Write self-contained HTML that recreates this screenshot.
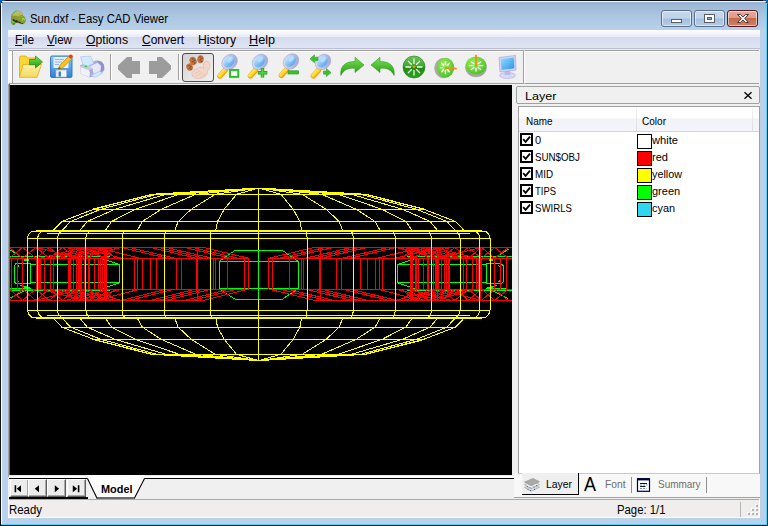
<!DOCTYPE html>
<html lang="en"><head><meta charset="utf-8"><title>Sun.dxf - Easy CAD Viewer</title>
<style>

html,body{margin:0;padding:0}
body{width:768px;height:526px;overflow:hidden;background:#0f5cba;position:relative;font-family:"Liberation Sans",sans-serif;font-size:12px}
div,span,svg{position:absolute;box-sizing:border-box}
.t{white-space:pre;transform-origin:0 50%;display:block}
u{text-decoration:underline;text-underline-offset:1px}
#win{left:0;top:0;width:768px;height:526px;background:#b9d1ea;border-radius:6px 6px 0 0;overflow:hidden;
  box-shadow:inset 0 0 0 1px #101418}
#title{left:1px;top:1px;width:766px;height:29px;background:linear-gradient(#97b3d1,#a9c4e0 45%,#b9d1ea);border-radius:5px 5px 0 0}
#hl-top{left:2px;top:1px;width:764px;height:1px;background:rgba(255,255,255,.85)}
#hl-left{left:1px;top:3px;width:1px;height:521px;background:#fff}
#hl-right{left:766px;top:3px;width:1px;height:522px;background:#3edcff}
#hl-bot{left:1px;top:524px;width:766px;height:1px;background:#3edcff}
#edge-bot{left:0;top:525px;width:768px;height:1px;background:#0a0a0a}
#client{left:8px;top:30px;width:752px;height:488px;background:#fff}
.cb{top:10px;height:17px;border-radius:3px;border:1px solid #5b6f8e;box-shadow:inset 0 0 0 1px rgba(255,255,255,.55)}
#bmin,#bmax{background:linear-gradient(#c5d8ee 0,#bfd3eb 48%,#a5bfdd 52%,#b3cbe6 100%)}
#bmin{left:661px;width:31px}
#bmax{left:694px;width:31px}
#bclose{left:727px;width:31px;border-color:#5a1722;background:linear-gradient(#e9a99a 0,#e19885 46%,#c56a4d 50%,#cf7f63 100%)}
#menubar{left:8px;top:30px;width:752px;height:19px;background:linear-gradient(to bottom,#fff 0,#f4f6fb 3px,#e8ebf6 7px,#d5d9ed 7px,#dfe4f3 17px,#dfe4f3 18px,#bcc0d6 18px,#bcc0d6 19px)}
#toolrow{left:8px;top:49px;width:752px;height:36px;background:linear-gradient(#ececec 0,#ececec 1px,#f0f0f0 1px)}
#toolbar{left:9px;top:50px;width:515px;height:34px;background:#f0f0f0;border-right:1px solid #a0a0a0;border-bottom:1px solid #a0a0a0;border-top:1px solid #a0a0a0;box-shadow:inset 0 1px 0 #fff}
#toolrest{left:524px;top:50px;width:235px;height:34px;background:#f0f0f0;border-bottom:1px solid #a0a0a0;border-top:1px solid #a0a0a0;border-left:1px solid #fff;box-shadow:inset 0 1px 0 #fff}
#grip{left:8px;top:51px;width:5px;height:32px;background:#fff;border-right:1px solid #a0a0a0}
.sep{top:54px;width:2px;height:26px;border-left:1px solid #a0a0a0;border-right:1px solid #fff}
#pressed{left:182px;top:53px;width:32px;height:29px;border:1px solid #4d4d4d;border-radius:3px;background:linear-gradient(135deg,#d0d0d0,#e4e4e4 50%,#efefef)}
#main{left:8px;top:85px;width:752px;height:415px;background:#f0f0f0}
#canvas{left:10px;top:85px;width:502px;height:390px;background:#000;overflow:hidden}
#cleft{left:8px;top:84px;width:2px;height:393px;background:linear-gradient(to right,#a0a0a0 0,#a0a0a0 1px,#696969 1px)}
#tabbar{left:9px;top:475px;width:505px;height:24px;background:linear-gradient(#e9e9e9 0,#e9e9e9 1px,#fff 1px,#fff 3px,#f0f0f0 3px)}
#tabline{left:9px;top:478px;width:505px;height:1px;background:#000}
#navbot{left:9px;top:497px;width:79px;height:2px;background:#000}
.nb{top:479px;width:19px;height:18px;background:#ececec;border-top:1px solid #fff;border-left:1px solid #fff;border-right:1px solid #5f5f5f;border-bottom:1px solid #5f5f5f;box-shadow:inset -1px -1px 0 #a8a8a8}
#panel{left:516px;top:86px;width:244px;height:412px;background:#f0f0f0}
#phead{left:516px;top:86px;width:244px;height:18px;background:#f0f0f0;border:1px solid #a0a0a0;border-radius:2px}
#plist{left:518px;top:106px;width:242px;height:368px;background:#fff;border:1px solid #a0a0a0;border-bottom-color:#c8c8c8}
#lhead{left:519px;top:107px;width:240px;height:25px;background:linear-gradient(#fff 0,#fff 45%,#f1f3f9 50%,#f4f5fa 100%);border-bottom:1px solid #d5d5d5}
.csep{top:108px;width:1px;height:23px;background:linear-gradient(#f2f2f2,#dcdcdc)}
.chk{left:520px;width:13px;height:13px;border:1px solid #000;background:#fff;box-shadow:inset 0 0 0 1px #000}
.sw{left:637px;width:15px;height:15px;border:1px solid #000}
#ptabs{left:514px;top:474px;width:246px;height:23px;background:#f8f8f8}
#ptabline{left:514px;top:497px;width:246px;height:1px;background:#a0a0a0}
#tabL{left:522px;top:473px;width:57px;height:22px;background:#efefef;border-right:1px solid #000;border-bottom:1px solid #000}
.tsep{top:477px;width:1px;height:16px;background:#909090}
#status{left:9px;top:499px;width:750px;height:18px;background:#f0eded;border-top:1px solid #a9a9a9}
#ssep{left:740px;top:502px;width:1px;height:15px;background:#b5b5b5}

</style></head>
<body>
<section aria-label="window frame">
<div id="win"></div><div id="title"></div><div id="hl-top"></div><div id="hl-left"></div><div id="hl-right"></div><div id="hl-bot"></div><div id="edge-bot"></div>
<div id="client"></div>
<div id="bmin" class="cb"></div><div id="bmax" class="cb"></div><div id="bclose" class="cb"></div>
<svg style="left:661px;top:10px" width="98" height="17" viewBox="0 0 98 17">
<rect x="10.5" y="9.5" width="10" height="3" fill="#fff" stroke="#5a5f66" stroke-width="1"/>
<rect x="43.500" y="4.5" width="10" height="8" fill="#fff" stroke="#5a5f66" stroke-width="1"/><rect x="46.5" y="7.5" width="4" height="2" fill="#8fa9cf" stroke="#5a5f66" stroke-width="1"/>
<path d="M76.5 4.500 l3 0 l2.500 2.600 l2.500 -2.600 l3 0 l-3.800 4 l3.800 4 l-3 0 l-2.500 -2.600 l-2.500 2.600 l-3 0 l3.800 -4z" fill="#fff" stroke="#4b3a3a" stroke-width="1"/>
</svg>
</section><section aria-label="menu and toolbar">
<div id="menubar"></div><div id="toolrow"></div><div id="toolbar"></div><div id="toolrest"></div><div id="grip"></div>
<div class="sep" style="left:110px"></div><div class="sep" style="left:178px"></div>
<div id="pressed"></div>
</section><section aria-label="drawing view">
<div id="main"></div><div id="cleft"></div><div id="ctop"></div><div id="rtop"></div>
<div id="canvas"><svg style="left:0;top:0" width="502" height="390" viewBox="10 85 502 390" shape-rendering="crispEdges" fill="none" stroke-width="1">
<path stroke="#00ff00" d="M16 263.7 L30.5 263.7 L30.5 283.6 L16 283.6 L14.1 281.6 L14.1 265.7 L16 263.7 M501.4 263.7 L486.9 263.7 L486.9 283.6 L501.4 283.6 L503.3 281.6 L503.3 265.7 L501.4 263.7 M19 265.6 L17.3 267 L17.3 280.4 L19 281.8 M498.4 265.6 L500.1 267 L500.1 280.4 L498.4 281.8 M30.5 264.5 L119.5 264.5 L119.5 282.8 L30.5 282.8 M486.9 264.5 L397.9 264.5 L397.9 282.8 L486.9 282.8 M119.5 264.5 L102 258.6 M397.9 264.5 L415.4 258.6 M119.5 282.8 L102 288.8 M397.9 282.8 L415.4 288.8 M0 256.7 L110 256.7 M517.4 256.7 L407.4 256.7 M0 290.3 L110 290.3 M517.4 290.3 L407.4 290.3 M9 249.3 L22 257 M508.4 249.3 L495.4 257 M9 298.6 L25 290.7 M508.4 298.6 L492.4 290.7 M24 259.8 L28.5 259.8 M493.4 259.8 L488.9 259.8 M24 260.8 L28.5 260.8 M493.4 260.8 L488.9 260.8 M24 287.2 L28.5 287.2 M493.4 287.2 L488.9 287.2 M20 285.5 L30 287.5 M497.4 285.5 L487.4 287.5 M10 288.3 L31 288.3 M507.4 288.3 L486.4 288.3 M235 250.4 L282.4 250.4 L298.4 261.5 L298.4 288.4 L282.4 299.2 L235 299.2 L219 288.4 L219 261.5 L235 250.4 M219 261.5 L298.4 261.5 M219 288.4 L298.4 288.4"/>
<path stroke="#ff0000" d="M0 247.4 L203 247.4 L248.5 258.2 M517.4 247.4 L314.4 247.4 L268.9 258.2 M0 300.4 L203 300.4 L248.5 289.1 M517.4 300.4 L314.4 300.4 L268.9 289.1 M0 258.2 L248.5 258.2 M517.4 258.2 L268.9 258.2 M0 289.1 L248.5 289.1 M517.4 289.1 L268.9 289.1 M11.4 258.2 L11.4 289.1 M506 258.2 L506 289.1 M17.1 258.2 L17.1 289.1 M500.3 258.2 L500.3 289.1 M22.6 258.2 L22.6 289.1 M494.8 258.2 L494.8 289.1 M40.8 258.2 L40.8 289.1 M476.6 258.2 L476.6 289.1 M44.5 258.2 L44.5 289.1 M472.9 258.2 L472.9 289.1 M50.6 258.2 L50.6 289.1 M466.8 258.2 L466.8 289.1 M53.6 258.2 L53.6 289.1 M463.8 258.2 L463.8 289.1 M68.2 258.2 L68.2 289.1 M449.2 258.2 L449.2 289.1 M69.2 258.2 L69.2 289.1 M448.2 258.2 L448.2 289.1 M70.6 258.2 L70.6 289.1 M446.8 258.2 L446.8 289.1 M73 258.2 L73 289.1 M444.4 258.2 L444.4 289.1 M76 258.2 L76 289.1 M441.4 258.2 L441.4 289.1 M84 258.2 L84 289.1 M433.4 258.2 L433.4 289.1 M85.8 258.2 L85.8 289.1 M431.6 258.2 L431.6 289.1 M88.8 258.2 L88.8 289.1 M428.6 258.2 L428.6 289.1 M89.8 258.2 L89.8 289.1 M427.6 258.2 L427.6 289.1 M94.3 258.2 L94.3 289.1 M423.1 258.2 L423.1 289.1 M98.6 258.2 L98.6 289.1 M418.8 258.2 L418.8 289.1 M100.8 258.2 L100.8 289.1 M416.6 258.2 L416.6 289.1 M102 258.2 L102 289.1 M415.4 258.2 L415.4 289.1 M134.5 258.2 L134.5 289.1 M382.9 258.2 L382.9 289.1 M137.8 258.2 L137.8 289.1 M379.6 258.2 L379.6 289.1 M142.3 258.2 L142.3 289.1 M375.1 258.2 L375.1 289.1 M150.1 258.2 L150.1 289.1 M367.3 258.2 L367.3 289.1 M156.6 258.2 L156.6 289.1 M360.8 258.2 L360.8 289.1 M176.2 258.2 L176.2 289.1 M341.2 258.2 L341.2 289.1 M181.4 258.2 L181.4 289.1 M336 258.2 L336 289.1 M213.6 258.2 L213.6 289.1 M303.8 258.2 L303.8 289.1 M215.5 258.2 L215.5 289.1 M301.9 258.2 L301.9 289.1 M227.6 258.2 L227.6 289.1 M289.8 258.2 L289.8 289.1 M244.6 258.2 L244.6 289.1 M272.8 258.2 L272.8 289.1 M248.5 258.2 L248.5 289.1 M268.9 258.2 L268.9 289.1 M36 258.2 L36 289.1 M481.4 258.2 L481.4 289.1 M37 258.2 L37 289.1 M480.4 258.2 L480.4 289.1 M38 258.2 L38 289.1 M479.4 258.2 L479.4 289.1 M39 258.2 L39 289.1 M478.4 258.2 L478.4 289.1 M78.5 258.2 L78.5 289.1 M438.9 258.2 L438.9 289.1 M79.5 258.2 L79.5 289.1 M437.9 258.2 L437.9 289.1 M80.5 258.2 L80.5 289.1 M436.9 258.2 L436.9 289.1 M81.5 258.2 L81.5 289.1 M435.9 258.2 L435.9 289.1 M104.5 258.2 L104.5 289.1 M412.9 258.2 L412.9 289.1 M105.5 258.2 L105.5 289.1 M411.9 258.2 L411.9 289.1 M106.5 258.2 L106.5 289.1 M410.9 258.2 L410.9 289.1 M196.8 258.2 L196.8 289.1 M320.6 258.2 L320.6 289.1 M197.8 258.2 L197.8 289.1 M319.6 258.2 L319.6 289.1 M37.2 247.4 L37.2 300.4 M480.2 247.4 L480.2 300.4 M80 247.4 L80 300.4 M437.4 247.4 L437.4 300.4 M105.9 247.4 L105.9 300.4 M411.5 247.4 L411.5 300.4 M197.3 247.4 L197.3 300.4 M320.1 247.4 L320.1 300.4 M121 247.4 L167 258.2 M396.4 247.4 L350.4 258.2 M121 300.4 L167 289.1 M396.4 300.4 L350.4 289.1 M129 247.4 L175 258.2 M388.4 247.4 L342.4 258.2 M129 300.4 L175 289.1 M388.4 300.4 L342.4 289.1 M150 247.4 L196 258.2 M367.4 247.4 L321.4 258.2 M150 300.4 L196 289.1 M367.4 300.4 L321.4 289.1 M158 247.4 L204 258.2 M359.4 247.4 L313.4 258.2 M158 300.4 L204 289.1 M359.4 300.4 L313.4 289.1 M166 247.4 L212 258.2 M351.4 247.4 L305.4 258.2 M166 300.4 L212 289.1 M351.4 300.4 L305.4 289.1 M184 247.4 L230 258.2 M333.4 247.4 L287.4 258.2 M184 300.4 L230 289.1 M333.4 300.4 L287.4 289.1 M192 247.4 L238 258.2 M325.4 247.4 L279.4 258.2 M192 300.4 L238 289.1 M325.4 300.4 L279.4 289.1 M203 247.4 L248.5 258.2 M314.4 247.4 L268.9 258.2 M203 300.4 L248.5 289.1 M314.4 300.4 L268.9 289.1 M40 258.2 L84 247.4 M477.4 258.2 L433.4 247.4 M40 289.1 L84 300.4 M477.4 289.1 L433.4 300.4 M47.5 258.2 L91.5 247.4 M469.9 258.2 L425.9 247.4 M47.5 289.1 L91.5 300.4 M469.9 289.1 L425.9 300.4 M55 258.2 L99 247.4 M462.4 258.2 L418.4 247.4 M55 289.1 L99 300.4 M462.4 289.1 L418.4 300.4 M62.5 258.2 L106.5 247.4 M454.9 258.2 L410.9 247.4 M62.5 289.1 L106.5 300.4 M454.9 289.1 L410.9 300.4 M70 258.2 L114 247.4 M447.4 258.2 L403.4 247.4 M70 289.1 L114 300.4 M447.4 289.1 L403.4 300.4 M77.5 258.2 L121.5 247.4 M439.9 258.2 L395.9 247.4 M77.5 289.1 L121.5 300.4 M439.9 289.1 L395.9 300.4 M36 247.4 L80 258.2 M481.4 247.4 L437.4 258.2 M36 300.4 L80 289.1 M481.4 300.4 L437.4 289.1 M66 247.4 L110 258.2 M451.4 247.4 L407.4 258.2 M66 300.4 L110 289.1 M451.4 300.4 L407.4 289.1 M78 247.4 L122 258.2 M439.4 247.4 L395.4 258.2 M78 300.4 L122 289.1 M439.4 300.4 L395.4 289.1 M96 247.4 L140 258.2 M421.4 247.4 L377.4 258.2 M96 300.4 L140 289.1 M421.4 300.4 L377.4 289.1 M9.3 247.4 L22.6 258.2 M508.1 247.4 L494.8 258.2 M22.6 247.4 L9.3 258.2 M494.8 247.4 L508.1 258.2 M9.3 300.4 L22.6 289.1 M508.1 300.4 L494.8 289.1 M22.6 300.4 L9.3 289.1 M494.8 300.4 L508.1 289.1 M22.6 247.4 L35.9 258.2 M494.8 247.4 L481.5 258.2 M35.9 247.4 L22.6 258.2 M481.5 247.4 L494.8 258.2 M22.6 300.4 L35.9 289.1 M494.8 300.4 L481.5 289.1 M35.9 300.4 L22.6 289.1 M481.5 300.4 L494.8 289.1 M35.9 247.4 L49.2 258.2 M481.5 247.4 L468.2 258.2 M49.2 247.4 L35.9 258.2 M468.2 247.4 L481.5 258.2 M35.9 300.4 L49.2 289.1 M481.5 300.4 L468.2 289.1 M49.2 300.4 L35.9 289.1 M468.2 300.4 L481.5 289.1 M49.2 247.4 L62.5 258.2 M468.2 247.4 L454.9 258.2 M62.5 247.4 L49.2 258.2 M454.9 247.4 L468.2 258.2 M49.2 300.4 L62.5 289.1 M468.2 300.4 L454.9 289.1 M62.5 300.4 L49.2 289.1 M454.9 300.4 L468.2 289.1 M62.5 247.4 L75.8 258.2 M454.9 247.4 L441.6 258.2 M75.8 247.4 L62.5 258.2 M441.6 247.4 L454.9 258.2 M62.5 300.4 L75.8 289.1 M454.9 300.4 L441.6 289.1 M75.8 300.4 L62.5 289.1 M441.6 300.4 L454.9 289.1 M75.8 247.4 L89.1 258.2 M441.6 247.4 L428.3 258.2 M89.1 247.4 L75.8 258.2 M428.3 247.4 L441.6 258.2 M75.8 300.4 L89.1 289.1 M441.6 300.4 L428.3 289.1 M89.1 300.4 L75.8 289.1 M428.3 300.4 L441.6 289.1 M89.1 247.4 L102.4 258.2 M428.3 247.4 L415 258.2 M102.4 247.4 L89.1 258.2 M415 247.4 L428.3 258.2 M89.1 300.4 L102.4 289.1 M428.3 300.4 L415 289.1 M102.4 300.4 L89.1 289.1 M415 300.4 L428.3 289.1 M102.4 247.4 L115.7 258.2 M415 247.4 L401.7 258.2 M115.7 247.4 L102.4 258.2 M401.7 247.4 L415 258.2 M102.4 300.4 L115.7 289.1 M415 300.4 L401.7 289.1 M115.7 300.4 L102.4 289.1 M401.7 300.4 L415 289.1 M104.9 247.4 L104.9 300.4 M412.5 247.4 L412.5 300.4 M105.9 247.4 L105.9 300.4 M411.5 247.4 L411.5 300.4 M106.9 247.4 L106.9 300.4 M410.5 247.4 L410.5 300.4"/>
<path stroke="#ffff00" d="M152.3 194.3 L365.1 194.3 M93.6 209.3 L423.8 209.3 M61.8 221.5 L455.6 221.5 M52.8 231 L464.6 231 M258.7 188 L258.7 194.3 L258.7 209.3 L258.7 221.5 L258.7 231 M258.7 188 L280.9 194.3 L293.2 209.3 L299.9 221.5 L301.7 231 M258.7 188 L236.5 194.3 L224.2 209.3 L217.5 221.5 L215.7 231 M258.7 188 L302.2 194.3 L326.2 209.3 L339.2 221.5 L342.9 231 M258.7 188 L215.2 194.3 L191.2 209.3 L178.2 221.5 L174.5 231 M258.7 188 L321.6 194.3 L356.3 209.3 L375.1 221.5 L380.4 231 M258.7 188 L195.8 194.3 L161.1 209.3 L142.3 221.5 L137 231 M258.7 188 L338.2 194.3 L382.1 209.3 L405.8 221.5 L412.5 231 M258.7 188 L179.2 194.3 L135.3 209.3 L111.6 221.5 L104.9 231 M258.7 188 L351.4 194.3 L402.5 209.3 L430.2 221.5 L438 231 M258.7 188 L166 194.3 L114.9 209.3 L87.2 221.5 L79.4 231 M258.7 188 L360.5 194.3 L416.6 209.3 L447 221.5 L455.6 231 M258.7 188 L156.9 194.3 L100.8 209.3 L70.4 221.5 L61.8 231 M258.7 188 L365.1 194.3 L423.8 209.3 L455.6 221.5 L464.6 231 M258.7 188 L152.3 194.3 L93.6 209.3 L61.8 221.5 L52.8 231 M152.3 354.3 L365.1 354.3 M93.6 339.3 L423.8 339.3 M61.8 327.1 L455.6 327.1 M52.8 317.6 L464.6 317.6 M258.7 360.6 L258.7 354.3 L258.7 339.3 L258.7 327.1 L258.7 317.6 M258.7 360.6 L280.9 354.3 L293.2 339.3 L299.9 327.1 L301.7 317.6 M258.7 360.6 L236.5 354.3 L224.2 339.3 L217.5 327.1 L215.7 317.6 M258.7 360.6 L302.2 354.3 L326.2 339.3 L339.2 327.1 L342.9 317.6 M258.7 360.6 L215.2 354.3 L191.2 339.3 L178.2 327.1 L174.5 317.6 M258.7 360.6 L321.6 354.3 L356.3 339.3 L375.1 327.1 L380.4 317.6 M258.7 360.6 L195.8 354.3 L161.1 339.3 L142.3 327.1 L137 317.6 M258.7 360.6 L338.2 354.3 L382.1 339.3 L405.8 327.1 L412.5 317.6 M258.7 360.6 L179.2 354.3 L135.3 339.3 L111.6 327.1 L104.9 317.6 M258.7 360.6 L351.4 354.3 L402.5 339.3 L430.2 327.1 L438 317.6 M258.7 360.6 L166 354.3 L114.9 339.3 L87.2 327.1 L79.4 317.6 M258.7 360.6 L360.5 354.3 L416.6 339.3 L447 327.1 L455.6 317.6 M258.7 360.6 L156.9 354.3 L100.8 339.3 L70.4 327.1 L61.8 317.6 M258.7 360.6 L365.1 354.3 L423.8 339.3 L455.6 327.1 L464.6 317.6 M258.7 360.6 L152.3 354.3 L93.6 339.3 L61.8 327.1 L52.8 317.6 M258.7 188 L366 194.3 L425.2 209.3 M258.7 188 L151.4 194.3 L92.2 209.3 M258.7 360.6 L366 354.3 L425.2 339.3 M258.7 360.6 L151.4 354.3 L92.2 339.3 M258.7 188 L258.7 360.6 M27.4 238.3 L490 238.3 M31.9 231 L485.5 231 M35.9 230.1 L481.5 230.1 M47 233.1 L470.4 233.1 M27.4 310.3 L490 310.3 M31.9 317.6 L485.5 317.6 M35.9 318.5 L481.5 318.5 M47 315.5 L470.4 315.5 M306.1 231 L306.8 234.5 L307.1 238.3 L307.1 310.3 L306.8 314.1 L306.1 317.6 M211.3 231 L210.6 234.5 L210.3 238.3 L210.3 310.3 L210.6 314.1 L211.3 317.6 M351.4 231 L352.8 234.5 L353.3 238.3 L353.3 310.3 L352.8 314.1 L351.4 317.6 M166 231 L164.6 234.5 L164.1 238.3 L164.1 310.3 L164.6 314.1 L166 317.6 M392.7 231 L394.7 234.5 L395.4 238.3 L395.4 310.3 L394.7 314.1 L392.7 317.6 M124.7 231 L122.7 234.5 L122 238.3 L122 310.3 L122.7 314.1 L124.7 317.6 M428.1 231 L430.7 234.5 L431.6 238.3 L431.6 310.3 L430.7 314.1 L428.1 317.6 M89.3 231 L86.7 234.5 L85.8 238.3 L85.8 310.3 L86.7 314.1 L89.3 317.6 M456.2 231 L459.1 234.5 L460.1 238.3 L460.1 310.3 L459.1 314.1 L456.2 317.6 M61.2 231 L58.3 234.5 L57.3 238.3 L57.3 310.3 L58.3 314.1 L61.2 317.6 M475.5 231 L478.8 234.5 L479.9 238.3 L479.9 310.3 L478.8 314.1 L475.5 317.6 M41.9 231 L38.6 234.5 L37.5 238.3 L37.5 310.3 L38.6 314.1 L41.9 317.6 M485.5 231 L488.8 234.5 L490 238.3 L490 310.3 L488.8 314.1 L485.5 317.6 M31.9 231 L28.6 234.5 L27.4 238.3 L27.4 310.3 L28.6 314.1 L31.9 317.6"/>
<path stroke="#00ff00" d="M258.7 250.4 L258.7 299.2"/>
</svg></div>
<div id="cright"></div><div id="tabbar"></div><div id="tabline"></div><div id="navl"></div><div id="navr"></div>
<div class="nb" style="left:10px"></div>
<div class="nb" style="left:28px"></div>
<div class="nb" style="left:47px"></div>
<div class="nb" style="left:67px"></div>
<div id="navbot"></div>
<svg style="left:9px;top:475px" width="200" height="25" viewBox="9 475 200 25">
<path d="M87.500 478 L97 498.500 L134.500 498.500 L144.500 478 L144.500 475 L87.500 475z" fill="#fff"/>
<path d="M87.500 478.500 L97 498.200 M134.400 498.200 L144.500 478.500" stroke="#000" stroke-width="1.100" fill="none"/>
<path d="M96.500 498 H135" stroke="#3a3a3a" stroke-width="1.400"/>
<path d="M14.600 485.300 h1.600 v7 h-1.600z M21 485.300 v7 l-4.300 -3.500z M39 485.300 v7 l-4.300 -3.500z M54.800 485.300 v7 l4.300 -3.500z M72.800 485.300 v7 l4.300 -3.500z M77.800 485.300 h1.600 v7 h-1.600z" fill="#000"/>
</svg>
</section><section aria-label="layer panel">
<div id="panel"></div><div id="phead"></div><div id="plist"></div><div id="lhead"></div>
<div class="csep" style="left:636px"></div><div class="csep" style="left:752px"></div>
<svg style="left:743px;top:91px" width="10" height="9" viewBox="0 0 10 9"><path d="M1.500 1.300 L8.500 7.700 M8.500 1.300 L1.500 7.700" stroke="#000" stroke-width="1.300" fill="none"/></svg>
<div class="chk" style="top:133px"></div>
<svg style="left:520px;top:133px" width="13" height="13" viewBox="0 0 13 13"><path d="M3.200 6.200 L5.600 8.800 L10 3.600" stroke="#000" stroke-width="1.800" fill="none"/></svg>
<div class="sw" style="top:134px;background:#fff"></div>
<div class="chk" style="top:150px"></div>
<svg style="left:520px;top:150px" width="13" height="13" viewBox="0 0 13 13"><path d="M3.200 6.200 L5.600 8.800 L10 3.600" stroke="#000" stroke-width="1.800" fill="none"/></svg>
<div class="sw" style="top:151px;background:#ff0000"></div>
<div class="chk" style="top:167px"></div>
<svg style="left:520px;top:167px" width="13" height="13" viewBox="0 0 13 13"><path d="M3.200 6.200 L5.600 8.800 L10 3.600" stroke="#000" stroke-width="1.800" fill="none"/></svg>
<div class="sw" style="top:168px;background:#ffff00"></div>
<div class="chk" style="top:184px"></div>
<svg style="left:520px;top:184px" width="13" height="13" viewBox="0 0 13 13"><path d="M3.200 6.200 L5.600 8.800 L10 3.600" stroke="#000" stroke-width="1.800" fill="none"/></svg>
<div class="sw" style="top:185px;background:#00ff00"></div>
<div class="chk" style="top:201px"></div>
<svg style="left:520px;top:201px" width="13" height="13" viewBox="0 0 13 13"><path d="M3.200 6.200 L5.600 8.800 L10 3.600" stroke="#000" stroke-width="1.800" fill="none"/></svg>
<div class="sw" style="top:202px;background:#30d5f0"></div>
<div id="ptabs"></div><div id="ptabline"></div><div id="tabL"></div>
<div class="tsep" style="left:631px"></div><div class="tsep" style="left:706px"></div>
</section><section aria-label="status bar">
<div id="status"></div><div id="ssep"></div>
<svg style="left:743px;top:504px" width="16" height="12" viewBox="0 0 16 12"><rect x="12" y="0" width="2" height="2" fill="#fff"/><rect x="13" y="1" width="2" height="2" fill="#b9b3b3"/><rect x="8" y="4" width="2" height="2" fill="#fff"/><rect x="9" y="5" width="2" height="2" fill="#b9b3b3"/><rect x="12" y="4" width="2" height="2" fill="#fff"/><rect x="13" y="5" width="2" height="2" fill="#b9b3b3"/><rect x="4" y="8" width="2" height="2" fill="#fff"/><rect x="5" y="9" width="2" height="2" fill="#b9b3b3"/><rect x="8" y="8" width="2" height="2" fill="#fff"/><rect x="9" y="9" width="2" height="2" fill="#b9b3b3"/><rect x="12" y="8" width="2" height="2" fill="#fff"/><rect x="13" y="9" width="2" height="2" fill="#b9b3b3"/></svg>
</section><section aria-label="icons">
<svg style="left:10px;top:9px" width="18" height="18" viewBox="10 9 18 18">
<path d="M11 19.500 C10.500 15 13 11.200 17 10.600 C20.500 10.200 22.500 12.500 23 15.500 C25 16.500 26.200 18.500 25.800 20.800 C25.800 22.500 24.500 24 22.500 24.200 C20.500 24.500 19.500 23 18 22.800 C16.500 22.600 15.500 23.200 14.800 24.200 C13.800 25.300 11.800 25 11.300 23.500 C10.800 22.500 11.200 21 11 19.500z" fill="#8a9a2c"/>
<path d="M12.500 16 C13 12.500 16 10.800 18.500 11 C21 11.300 22.300 13 22.600 15.300 C21 14.500 19.500 15.500 18 16.500 C16 15.500 14 15 12.500 16z" fill="#cdb86e" opacity=".9"/>
<path d="M21.500 18.500 C23 17.500 25 18.500 25.300 20 C24 20.500 22.500 20 21.500 18.500z" fill="#c9c070" opacity=".9"/>
<path d="M12 21.500 C13 20.500 14.500 21 15 22 C14 23 12.800 23 12 21.500z" fill="#c9c070" opacity=".8"/>
<path d="M12.500 19.500 L14 19 L15 20.500 L17 20 L18 21.500 L20 21.800 L21 23 L23.500 23.300 L22.500 24 L20 23.200 L18 22.500 L16 22.400 L14.500 21.800 L13 21z" fill="#2e2a26"/>
<rect x="13" y="23.500" width="1.500" height="1" fill="#4a4420"/>
<g fill="#4fe03a"><rect x="14" y="12.500" width="1.200" height="1.200"/><rect x="16.500" y="14.800" width="1.200" height="1.200"/><rect x="18.800" y="14" width="1.200" height="1.200"/><rect x="18.500" y="16.800" width="1.200" height="1.200"/><rect x="20.800" y="15.800" width="1.200" height="1.200"/><rect x="21.800" y="20" width="1.200" height="1.200"/><rect x="16" y="11.300" width="1" height="1"/><rect x="13.800" y="21.800" width="1.200" height="1.200"/><rect x="11.300" y="20.300" width="1" height="1"/></g>
</svg><svg style="left:8px;top:50px" width="752" height="35" viewBox="8 50 752 35" fill="none">
<defs>
<linearGradient id="gHandle" x1="0" y1="0" x2="1" y2="1"><stop offset="0" stop-color="#fff27a"/><stop offset="1" stop-color="#ffc000"/></linearGradient>
<linearGradient id="gRim" x1="0" y1="0" x2="1" y2="1"><stop offset="0" stop-color="#e6e6f6"/><stop offset="1" stop-color="#9c9ccc"/></linearGradient>
<linearGradient id="gLens" x1="0" y1="0" x2="0" y2="1"><stop offset="0" stop-color="#bfe4ff"/><stop offset="1" stop-color="#5aa8f2"/></linearGradient>
<linearGradient id="gGreen" x1="0" y1="0" x2="0" y2="1"><stop offset="0" stop-color="#7be052"/><stop offset="1" stop-color="#219a14"/></linearGradient>
<radialGradient id="gLime" cx=".4" cy=".35" r=".8"><stop offset="0" stop-color="#9cf05a"/><stop offset="1" stop-color="#3fb71f"/></radialGradient>
<linearGradient id="gDisc" x1="0" y1="0" x2="0" y2="1"><stop offset="0" stop-color="#6cc25c"/><stop offset=".48" stop-color="#3fa52f"/><stop offset=".52" stop-color="#1f8a12"/><stop offset="1" stop-color="#2fa321"/></linearGradient>
<linearGradient id="gFloppy" x1="0" y1="0" x2="0" y2="1"><stop offset="0" stop-color="#8cc4f6"/><stop offset="1" stop-color="#2f7fd8"/></linearGradient>
<linearGradient id="gScreen" x1="0" y1="0" x2="1" y2="1"><stop offset="0" stop-color="#8fe0ff"/><stop offset="1" stop-color="#2f8fe6"/></linearGradient>
<linearGradient id="gFolder" x1="0" y1="0" x2="0" y2="1"><stop offset="0" stop-color="#fdf0a8"/><stop offset="1" stop-color="#f6d95e"/></linearGradient>
</defs>

<!-- open -->
<g>
<path d="M19.500 57 L20.500 56 L26 56 L27.500 58 L35 58 L35 65 L19.500 77z" fill="#fbd62e" stroke="#e2a21c" stroke-width=".8"/>
<path d="M19.500 77.300 L23 64.500 L41.500 64.500 L37 77.300z" fill="url(#gFolder)" stroke="#e0a92a" stroke-width=".8"/>
<path d="M29.500 59.500 L35.500 59.500 L35.500 56 L42.500 62 L35.500 68 L35.500 64.800 L29.500 64.800z" fill="url(#gGreen)" stroke="#1f8c14" stroke-width=".7"/>
</g>
<!-- save -->
<g>
<path d="M50.500 57.500 Q50.500 56 52 56 L70.500 56 Q72 56 72 57.500 L72 76 Q72 77.500 70.500 77.500 L52 77.500 Q50.500 77.500 50.500 76z" fill="url(#gFloppy)" stroke="#2b6fc4" stroke-width=".9"/>
<rect x="53.500" y="57" width="15" height="11" fill="#dff0ff"/>
<path d="M55 59.500 H64 M55 62 H62 M55 64.500 H59" stroke="#8db9e8" stroke-width="1"/>
<rect x="56" y="70" width="10.500" height="7" fill="#f2f4fa" stroke="#9fb6d6" stroke-width=".6"/>
<rect x="58.500" y="71.500" width="2.500" height="5" fill="#3b7fd6"/>
<path d="M58.300 69.300 L60 65 L68.500 56.500 L71.300 59.300 L62.800 67.800z" fill="#f7c21e" stroke="#c98a06" stroke-width=".7"/>
<path d="M58.300 69.300 L59 66.800 L60.800 68.600z" fill="#5a4a2a"/>
<circle cx="70.800" cy="56.300" r="1.900" fill="#e53a2e"/>
</g>
<!-- print -->
<g>
<path d="M80 66.200 C80 64.500 84 63.800 88 64 L95.500 60.600 C100 59.800 104.200 63 104.200 67 L104.200 70 C103 73 99 75.200 95 76.600 L89 77.200 L80.500 73.600z" fill="#a9abda"/>
<path d="M97 60.800 C101 60.300 104.200 63.400 104.200 67 L104.200 70 L100.500 72 L101 66z" fill="#8f92cc"/>
<path d="M89.500 66.500 L97.500 62.800 L101 66 L100.300 71.200 L93.500 73.800 L92.500 68.500z" fill="#e6e7f7"/>
<path d="M80 66.200 L88 64.200 L92.500 68.500 L89 70.200z" fill="#c7c9ec"/>
<path d="M80.300 66.700 L89 70.200 C90.200 72 90.200 75 89 77 L80.500 73.600z" fill="#f0f1fb"/>
<path d="M80.600 56.700 L90.600 56.200 L93.800 63.300 L88 66 L83 64.600z" fill="#d2e8fc" stroke="#a5c6ec" stroke-width=".7"/>
<path d="M91.200 75.200 L99.200 71.500 L102.800 73 L95.500 77.400z" fill="#d2e8fc" stroke="#a5c6ec" stroke-width=".6"/>
<ellipse cx="85.800" cy="66.300" rx="1.500" ry=".9" fill="#3fd03a"/>
</g>
<!-- back / forward (disabled) -->
<path d="M118 65.500 L127 57 L132 57 L132 61 L140 61 L140 74 L132 74 L132 78 L127 78 L118 69.500z" fill="#9c9c9c"/>
<path d="M171 65.500 L162 57 L157 57 L157 61 L149 61 L149 74 L157 74 L157 78 L162 78 L171 69.500z" fill="#9c9c9c"/>
<!-- pan (paw) -->
<g>
<ellipse cx="199.800" cy="73" rx="8" ry="5.400" fill="#f4d5c8" stroke="#dcb9ab" stroke-width=".6" transform="rotate(-14 199.800 73)"/>
<ellipse cx="206.600" cy="66" rx="3.300" ry="4.800" fill="#f4d5c8" stroke="#dcb9ab" stroke-width=".6" transform="rotate(12 206.600 66)"/>
<path d="M201 70 L207 68.500 L207.500 72 L203 74z" fill="#f4d5c8"/>
<path d="M194 74 l6 -3 M196 76 l7 -3.500 M200 77 l6 -3" stroke="#e9c0b2" stroke-width=".7"/>
<ellipse cx="189.600" cy="67.100" rx="3.200" ry="3.700" fill="#c4733f" transform="rotate(-25 189.600 67.100)"/>
<ellipse cx="193.100" cy="61" rx="3.500" ry="4.200" fill="#c4733f" transform="rotate(-20 193.100 61)"/>
<ellipse cx="200.500" cy="59.200" rx="3.200" ry="4" fill="#c4733f" transform="rotate(5 200.500 59.200)"/>
<path d="M188.300 65.500h1.400 M190.200 66.800h1.300 M188.800 68.200h1.300 M190.600 69.200h1 M191.800 59h1.400 M193.800 60.300h1.400 M192.200 61.800h1.400 M194 63h1.300 M199.500 57h1.400 M201.200 58.500h1.300 M199.600 60h1.400 M201.200 61.500h1.200" stroke="#5e4034" stroke-width="1.100"/>
</g>
<!-- zoom window -->
<g>
<path d="M226.4 68.6 L225.0 70.5" stroke="#9a9ab8" stroke-width="2.600"/>
<path d="M225.0 70.5 L220.0 75.9" stroke="#eda400" stroke-width="5.400" stroke-linecap="round"/>
<path d="M224.7 70.2 L219.7 75.6" stroke="url(#gHandle)" stroke-width="3.800" stroke-linecap="round"/>
<ellipse cx="229.6" cy="62.1" rx="8.600" ry="7" fill="url(#gRim)" stroke="#a2a2cc" stroke-width=".5" transform="rotate(-45 229.6 62.1)"/>
<ellipse cx="228.9" cy="61.6" rx="6.400" ry="4.900" fill="url(#gLens)" transform="rotate(-45 228.9 61.6)"/>
<ellipse cx="230.0" cy="59.7" rx="3.400" ry="1.900" fill="#fff" opacity=".35" transform="rotate(-45 230.0 59.7)"/>
</g>
<rect x="230" y="70" width="8.200" height="6.900" fill="#fff" stroke="#22c322" stroke-width="1.900"/>
<!-- zoom in -->
<g>
<path d="M256.8 68.5 L255.4 70.4" stroke="#9a9ab8" stroke-width="2.600"/>
<path d="M255.4 70.4 L250.4 75.8" stroke="#eda400" stroke-width="5.400" stroke-linecap="round"/>
<path d="M255.1 70.1 L250.1 75.5" stroke="url(#gHandle)" stroke-width="3.800" stroke-linecap="round"/>
<ellipse cx="260" cy="62" rx="8.600" ry="7" fill="url(#gRim)" stroke="#a2a2cc" stroke-width=".5" transform="rotate(-45 260 62)"/>
<ellipse cx="259.3" cy="61.5" rx="6.400" ry="4.900" fill="url(#gLens)" transform="rotate(-45 259.3 61.5)"/>
<ellipse cx="260.4" cy="59.6" rx="3.400" ry="1.900" fill="#fff" opacity=".35" transform="rotate(-45 260.4 59.6)"/>
</g>
<path d="M262.500 68 V77.500 M257.800 72.700 H267.300" stroke="#1f9a1a" stroke-width="3.400"/>
<path d="M262.500 68.600 V76.900 M258.400 72.700 H266.700" stroke="#4fd03c" stroke-width="2"/>
<!-- zoom out -->
<g>
<path d="M287.8 68.0 L286.4 69.9" stroke="#9a9ab8" stroke-width="2.600"/>
<path d="M286.4 69.9 L281.4 75.3" stroke="#eda400" stroke-width="5.400" stroke-linecap="round"/>
<path d="M286.1 69.6 L281.1 75.0" stroke="url(#gHandle)" stroke-width="3.800" stroke-linecap="round"/>
<ellipse cx="291" cy="61.5" rx="8.600" ry="7" fill="url(#gRim)" stroke="#a2a2cc" stroke-width=".5" transform="rotate(-45 291 61.5)"/>
<ellipse cx="290.3" cy="61.0" rx="6.400" ry="4.900" fill="url(#gLens)" transform="rotate(-45 290.3 61.0)"/>
<ellipse cx="291.4" cy="59.1" rx="3.400" ry="1.900" fill="#fff" opacity=".35" transform="rotate(-45 291.4 59.1)"/>
</g>
<rect x="288" y="70.800" width="10.600" height="3.200" fill="#3cc02e" stroke="#1f9a1a" stroke-width=".6"/>
<!-- zoom extents -->
<g>
<path d="M319.8 68.5 L318.4 70.4" stroke="#9a9ab8" stroke-width="2.600"/>
<path d="M318.4 70.4 L313.4 75.8" stroke="#eda400" stroke-width="5.400" stroke-linecap="round"/>
<path d="M318.1 70.1 L313.1 75.5" stroke="url(#gHandle)" stroke-width="3.800" stroke-linecap="round"/>
<ellipse cx="323" cy="62" rx="8.600" ry="7" fill="url(#gRim)" stroke="#a2a2cc" stroke-width=".5" transform="rotate(-45 323 62)"/>
<ellipse cx="322.3" cy="61.5" rx="6.400" ry="4.900" fill="url(#gLens)" transform="rotate(-45 322.3 61.5)"/>
<ellipse cx="323.4" cy="59.6" rx="3.400" ry="1.900" fill="#fff" opacity=".35" transform="rotate(-45 323.4 59.6)"/>
</g>
<path d="M310 58.800 L314.500 54.800 L314.500 57.200 L318 57.200 L318 60.400 L314.500 60.400 L314.500 62.800z" fill="#3cc02e" stroke="#1f9a1a" stroke-width=".5"/>
<path d="M331 72.600 L326.500 68.600 L326.500 71 L323.500 71 L323.500 74.200 L326.500 74.200 L326.500 76.600z" fill="#3cc02e" stroke="#1f9a1a" stroke-width=".5"/>
<!-- redo -->
<path d="M340.800 75.500 C340 66 345 61.500 355 61.500 L355 57.300 L364 65 L355 72.500 L355 68.300 C348 67.500 343.500 70 340.800 75.500z" fill="url(#gGreen)" stroke="#2f9e20" stroke-width=".6"/>
<!-- undo -->
<path d="M394.200 75.500 C395 66 390 61.500 380 61.500 L380 57.300 L371 65 L380 72.500 L380 68.300 C387 67.500 391.500 70 394.200 75.500z" fill="url(#gGreen)" stroke="#2f9e20" stroke-width=".6"/>
<!-- regen disc -->
<g>
<circle cx="414" cy="67" r="11" fill="url(#gDisc)" stroke="#1d7d12" stroke-width=".6"/>
<path d="M414 58.500 V64 M414 70 V75.500 M405.500 67 H411 M417 67 H422.500 M408 61 L411.800 64.800 M416.200 69.200 L420 73 M420 61 L416.200 64.800 M411.800 69.200 L408 73" stroke="#eafbe4" stroke-width="1.300"/>
<circle cx="414" cy="67" r="1.300" fill="#f08a1e"/>
</g>
<!-- rotate discs -->
<g>
<ellipse cx="443.5" cy="68.1" rx="8.8" ry="9.8" fill="#a9aaa6" stroke="#8c8c8c" stroke-width=".5"/>
<ellipse cx="445.5" cy="67.6" rx="8.8" ry="9.8" fill="url(#gLime)"/>
<path d="M447.8 67.6 L451.1 67.6 M447.1 69.2 L449.5 72.3 M445.5 69.9 L445.5 74.2 M443.9 69.2 L441.5 72.3 M443.2 67.6 L439.9 67.6 M443.9 66.0 L441.5 62.9 M445.5 65.3 L445.5 61.0 M447.1 66.0 L449.5 62.9 " stroke="#fff" stroke-width="1.400" opacity=".95"/>
<path d="M445.500 67.600 L456 68.600" stroke="#f08a1e" stroke-width="1.800" stroke-linecap="round"/>
</g>
<g>
<ellipse cx="476" cy="67.8" rx="10.5" ry="9" fill="#a9aaa6" stroke="#8c8c8c" stroke-width=".5"/>
<ellipse cx="476" cy="65.6" rx="10.5" ry="9" fill="url(#gLime)"/>
<path d="M478.3 65.6 L483.3 65.6 M477.6 67.2 L481.2 69.7 M476.0 67.9 L476.0 71.4 M474.4 67.2 L470.8 69.7 M473.7 65.6 L468.7 65.6 M474.4 64.0 L470.8 61.5 M476.0 63.3 L476.0 59.8 M477.6 64.0 L481.2 61.5 " stroke="#fff" stroke-width="1.400" opacity=".95"/>
<path d="M476 65.600 L476 55.500" stroke="#f08a1e" stroke-width="1.800" stroke-linecap="round"/>
</g>
<!-- monitor -->
<g>
<ellipse cx="507.500" cy="75.500" rx="8" ry="3" fill="#d7d8f4" stroke="#a9abd8" stroke-width=".6"/>
<path d="M505 70 L510 70 L510.500 75 L504.500 75z" fill="#b9bbe6"/>
<path d="M499 57.500 L515.500 55.500 L516 70 L500 72z" fill="#d4d5f5" stroke="#a4a6dc" stroke-width=".7"/>
<path d="M500.800 59 L514 57.500 L514.300 68.300 L501.500 70z" fill="url(#gScreen)"/>
</g>
</svg><svg style="left:520px;top:474px" width="140" height="22" viewBox="520 474 140 22">
<path d="M524.500 487.500 L533 484 L539.500 487.300 L531 491.300z" fill="#d9d9d9" stroke="#9a9a9a" stroke-width=".6"/>
<path d="M524.500 484.800 L533 481.300 L539.500 484.600 L531 488.600z" fill="#ececec" stroke="#9a9a9a" stroke-width=".6"/>
<path d="M524.500 482 L533 478.500 L539.500 481.800 L531 485.800z" fill="#a9a9a9" stroke="#8f8f8f" stroke-width=".6"/>
<path d="M527 486.500h1 M529.500 487.700h1 M533.500 486.800h1 M536 485.600h1 M527.500 489.300h1 M530 490.400h1 M534 489.500h1" stroke="#3f6fb5" stroke-width="1"/>
<rect x="637.500" y="478.800" width="12" height="12.500" fill="#fff" stroke="#00003c" stroke-width="1.200"/>
<rect x="637" y="478.200" width="13" height="2.200" fill="#00003c"/>
<path d="M640 483.500 H647 M640 486.500 H645.500" stroke="#111" stroke-width="1"/>
<path d="M640 485 H647.500 M640 488.500 H646.500" stroke="#5f8fd0" stroke-width="1" stroke-dasharray="2 1"/>
</svg>
</section><section aria-label="labels">
<span class="t" style="left:535px;top:134.87px;font-size:11px;line-height:11px;color:#000;">0</span>
<span class="t" style="left:652px;top:134.87px;font-size:11px;line-height:11px;color:#000;transform:scaleX(1.0122);">white</span>
<span class="t" style="left:535px;top:151.87px;font-size:11px;line-height:11px;color:#000;transform:scaleX(0.8867);">SUN$OBJ</span>
<span class="t" style="left:652px;top:151.87px;font-size:11px;line-height:11px;color:#000;transform:scaleX(1.0059);">red</span>
<span class="t" style="left:535px;top:168.87px;font-size:11px;line-height:11px;color:#000;transform:scaleX(0.8923);">MID</span>
<span class="t" style="left:652px;top:168.87px;font-size:11px;line-height:11px;color:#000;transform:scaleX(0.9811);">yellow</span>
<span class="t" style="left:535px;top:185.87px;font-size:11px;line-height:11px;color:#000;transform:scaleX(0.8588);">TIPS</span>
<span class="t" style="left:652px;top:185.87px;font-size:11px;line-height:11px;color:#000;">green</span>
<span class="t" style="left:535px;top:202.87px;font-size:11px;line-height:11px;color:#000;transform:scaleX(0.8770);">SWIRLS</span>
<span class="t" style="left:652px;top:202.87px;font-size:11px;line-height:11px;color:#000;transform:scaleX(0.9892);">cyan</span>
<span class="t" style="left:30px;top:13.04px;font-size:12px;line-height:12px;color:#000;transform:scaleX(0.9419);">Sun.dxf - Easy CAD Viewer</span>
<span class="t" style="left:15px;top:34.04px;font-size:12px;line-height:12px;color:#000;transform:scaleX(0.9814);"><u>F</u>ile</span>
<span class="t" style="left:47px;top:34.04px;font-size:12px;line-height:12px;color:#000;transform:scaleX(0.9685);"><u>V</u>iew</span>
<span class="t" style="left:86px;top:34.04px;font-size:12px;line-height:12px;color:#000;transform:scaleX(1.0151);"><u>O</u>ptions</span>
<span class="t" style="left:142px;top:34.04px;font-size:12px;line-height:12px;color:#000;"><u>C</u>onvert</span>
<span class="t" style="left:198px;top:34.04px;font-size:12px;line-height:12px;color:#000;transform:scaleX(1.0171);">H<u>i</u>story</span>
<span class="t" style="left:249px;top:34.04px;font-size:12px;line-height:12px;color:#000;transform:scaleX(1.0532);"><u>H</u>elp</span>
<span class="t" style="left:525.2px;top:90.87px;font-size:11px;line-height:11px;color:#000;transform:scaleX(1.1442);">Layer</span>
<span class="t" style="left:526px;top:116.07px;font-size:11px;line-height:11px;color:#000;transform:scaleX(0.8997);">Name</span>
<span class="t" style="left:642px;top:116.07px;font-size:11px;line-height:11px;color:#000;transform:scaleX(0.9127);">Color</span>
<span class="t" style="left:546.3px;top:478.76px;font-size:11.5px;line-height:11.5px;color:#000;transform:scaleX(0.9034);">Layer</span>
<span class="t" style="left:584.1px;top:475.12px;font-size:19.5px;line-height:19.5px;color:#000;transform:scaleX(0.9220);">A</span>
<span class="t" style="left:604.6px;top:479.06px;font-size:11.5px;line-height:11.5px;color:#6d6d6d;transform:scaleX(0.8907);">Font</span>
<span class="t" style="left:657.5px;top:479.06px;font-size:11.5px;line-height:11.5px;color:#6d6d6d;transform:scaleX(0.8638);">Summary</span>
<span class="t" style="left:9.3px;top:503.74px;font-size:12px;line-height:12px;color:#000;transform:scaleX(0.9514);">Ready</span>
<span class="t" style="left:617.2px;top:503.74px;font-size:12px;line-height:12px;color:#000;transform:scaleX(0.9440);">Page: 1/1</span>
<span class="t" style="left:100.5px;top:483.59px;font-size:10.5px;line-height:10.5px;color:#000;font-weight:bold;transform:scaleX(1.0381);">Model</span>
</section>
</body></html>
